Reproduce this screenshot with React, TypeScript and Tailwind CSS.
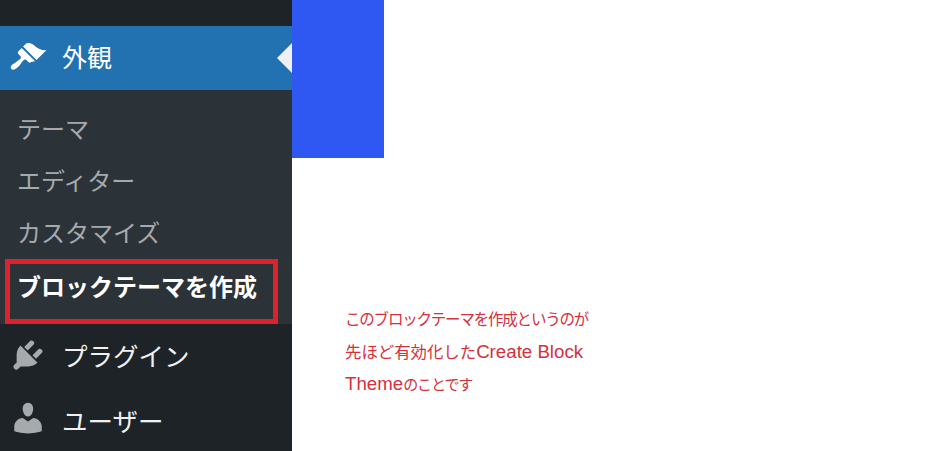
const appearance = "M14.48 11.06L7.41 3.99l1.5-1.5c.5-.56 2.3-.47 3.51.32 1.21.8 1.43 1.28 2.91 2.1 1.18.64 2.45 1.26 4.45.85zm-.71.71L6.7 4.7 4.93 6.47c-.39.39-.39 1.02 0 1.41l1.06 1.06c.39.39.39 1.03 0 1.42-.6.6-1.43 1.11-2.21 1.69-.35.26-.7.53-1.01.84C1.43 13.23.4 14.96 1.26 15.82c.86.86 2.59-.17 3.93-1.51.31-.31.58-.66.84-1.01.58-.78 1.09-1.61 1.69-2.21.39-.39 1.03-.39 1.42 0l1.06 1.06c.39.39 1.02.39 1.41 0z";
const plugin = "M13.11 4.36L9.87 7.6 8 5.73l3.24-3.24c.35-.34 1.05-.2 1.56.32.52.51.66 1.21.31 1.55zm-8 1.77l.91-1.12 9.01 9.01-1.19.84c-.71.71-2.63 1.16-3.82 1.16H6.14L4.9 17.26c-.59.59-1.54.59-2.12 0-.59-.58-.59-1.53 0-2.12l1.24-1.24v-3.88c0-1.13.4-3.19 1.09-3.89zm7.26 3.97l3.24-3.24c.34-.35 1.04-.21 1.55.31.52.51.66 1.21.31 1.55l-3.24 3.25z";
const user = "M10 9.25c-2.27 0-2.73-3.44-2.73-3.44C7 4.02 7.82 2 9.97 2c2.16 0 2.98 2.02 2.71 3.81 0 0-.41 3.44-2.68 3.44zm0 2.57L12.72 10c2.39 0 4.52 2.33 4.52 4.53v2.49s-3.65 1.13-7.24 1.13c-3.65 0-7.24-1.13-7.24-1.13v-2.49c0-2.25 1.94-4.48 4.47-4.48z";

function Icon({ d, className }: { d: string; className: string }) {
  return (
    <svg viewBox="0 0 20 20" className={className} fill="currentColor" aria-hidden="true">
      <path d={d} />
    </svg>
  );
}

export default function App() {
  return (
    <div className="flex h-[451px] w-[948px] overflow-hidden bg-white font-['Noto_Sans_CJK_JP',sans-serif]">
      <aside className="flex w-[292px] shrink-0 flex-col bg-[#1d2327]">
        <div className="h-[26px] shrink-0" />
        <div className="relative flex h-[64px] shrink-0 items-center bg-[#2271b1] text-white">
          <Icon d={appearance} className="ml-[9px] h-[38px] w-[38px]" />
          <span className="mb-[3px] ml-[15px] text-[25px] leading-none">外観</span>
          <div className="absolute right-0 top-[17px] h-0 w-0 border-y-[15px] border-r-[15px] border-y-transparent border-r-[#f0f0f1]" />
        </div>
        <div className="flex h-[234px] shrink-0 flex-col bg-[#2c3338] pt-[12px] text-[24px] leading-none text-[#a7aaad]">
          <div className="flex h-[52px] shrink-0 items-center pl-[17px]">テーマ</div>
          <div className="flex h-[52px] shrink-0 items-center pl-[17px]">エディター</div>
          <div className="flex h-[52px] shrink-0 items-center pl-[17px]">カスタマイズ</div>
          <div className="ml-[5px] mt-[1px] flex h-[65px] w-[273px] shrink-0 items-start border-[5px] border-[#dc222d] pl-[7px] pt-[10px] font-bold text-white">
            ブロックテーマを作成
          </div>
        </div>
        <div className="flex flex-col">
          <div className="flex h-[61px] shrink-0 items-center">
            <Icon d={plugin} className="ml-[9px] h-[38px] w-[38px] text-[#a7aaad]" />
            <span className="ml-[15px] text-[25.5px] leading-none text-[#f0f0f1]">プラグイン</span>
          </div>
          <div className="flex h-[65px] shrink-0 items-center">
            <Icon d={user} className="ml-[9px] h-[38px] w-[38px] text-[#a7aaad]" />
            <span className="ml-[15px] mt-[4px] text-[25.5px] leading-none text-[#f0f0f1]">ユーザー</span>
          </div>
        </div>
      </aside>
      <main className="flex-1">
        <div className="h-[158px] w-[92px] bg-[#2f58f2]" />
        <div className="ml-[53px] mt-[145px] font-['Liberation_Sans','Noto_Sans_CJK_JP',sans-serif] text-[#d5303c]">
          <p className="text-[15.5px] leading-[33px] tracking-[-1.2px] whitespace-nowrap">このブロックテーマを作成というのが</p>
          <p className="text-[18.7px] leading-[31px] whitespace-nowrap">
            <span className="text-[16.4px]">先ほど有効化した</span>Create Block
          </p>
          <p className="text-[18.7px] leading-[32px] whitespace-nowrap">
            Theme<span className="text-[15px] tracking-[-1.1px]">のことです</span>
          </p>
        </div>
      </main>
    </div>
  );
}
